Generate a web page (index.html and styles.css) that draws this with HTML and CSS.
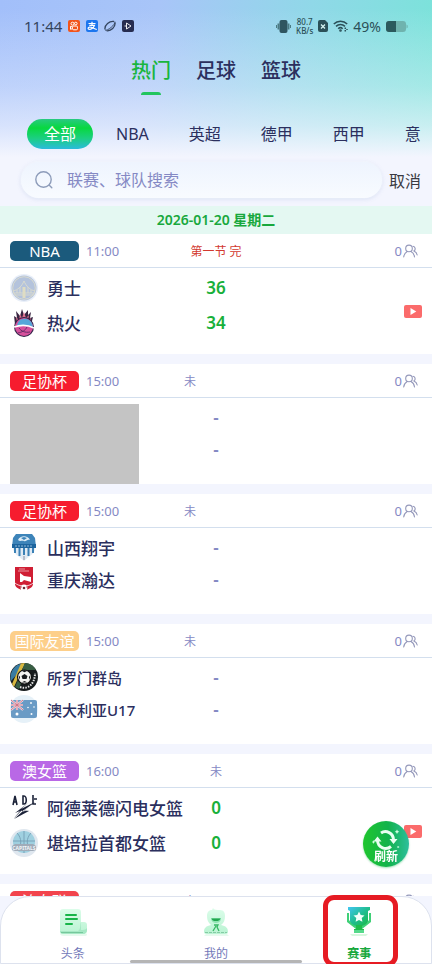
FILE: index.html
```html
<!DOCTYPE html>
<html lang="zh-CN">
<head>
  <meta charset="UTF-8">
  <meta name="viewport" content="width=device-width, initial-scale=1.0">
  <title>赛事</title>
  <link rel="stylesheet" href="styles.css">
</head>
<body>
  <svg class="sprite" aria-hidden="true">
    <symbol id="icon-people" viewBox="0 0 15 14">
      <g fill="none" stroke="#9498ba" stroke-width="1.1" stroke-linecap="round">
        <circle cx="6" cy="4.400" r="3.300"/>
        <path d="M.7 13c.3-3 2-4.600 3.500-5.500M7.900 7.500c1.800.9 3.300 2.600 3.600 5.500M10 2.200c2.200.2 3 3.400 1 4.700 1.700.7 2.900 2.100 3.200 4.100"/>
      </g>
    </symbol>
    <symbol id="icon-video" viewBox="0 0 18 13">
      <rect width="18" height="13" rx="2" fill="#fb6b6b"/>
      <path d="M6.500 3v7l5.800-3.500z" fill="#fff"/>
    </symbol>
  </svg>

  <div class="app">
    <header class="header">
      <div class="status-bar">
        <div class="status-left">
          <span class="clock">11:44</span>
          <svg width="12" height="12" viewBox="0 0 12 12">
            <rect width="12" height="12" rx="2" fill="#f2541b"/>
            <g fill="none" stroke="#fff" stroke-width="1">
              <circle cx="4.500" cy="3.700" r="1.500"/><circle cx="7.800" cy="3.500" r="1.300"/>
              <rect x="4.500" y="6" width="5" height="3.800" rx="1.200"/><path d="M4.500 7L2.500 6.300v3l2-.7"/>
            </g>
          </svg>
          <svg width="12" height="12" viewBox="0 0 12 12">
            <rect width="12" height="12" rx="2" fill="#1c76ee"/>
            <path d="M2.500 3.500h7M6 1.800v3.500M3.300 5.300h5.200C7.500 8 4.800 9.800 2.800 9.200 1.300 8.500 2.500 6.500 4.800 7.200c2 .5 3.500 1.600 6 2.300" fill="none" stroke="#fff" stroke-width="1.200"/>
          </svg>
          <svg width="12" height="12" viewBox="0 0 12 12" fill="none" stroke="#34455f" stroke-width="1.300">
            <path d="M1 9.500C.3 5 5.500.8 10 1.500M11 2.500c.7 4.500-4 8.900-8.500 8.200"/>
            <path d="M1 10c2 1.500 11-5.500 9.800-8.500" stroke-width=".9"/>
          </svg>
          <svg width="12" height="12" viewBox="0 0 12 12">
            <rect width="12" height="12" rx="2" fill="#262c50"/>
            <path d="M4.500 3v6L9 6zM2.500 6h2" fill="none" stroke="#fff" stroke-width=".9"/>
          </svg>
        </div>
        <div class="status-right">
          <svg width="15" height="13" viewBox="0 0 15 13">
            <rect x="3.500" y="0" width="8" height="13" rx="2" fill="#2f5560"/>
            <path d="M1.500 3.500h2v6h-2zM11.500 3.500h2v6h-2zM0 5h1v3H0zM14 5h1v3h-1z" fill="#4b7b84"/>
          </svg>
          <div class="speed"><span>80.7</span><span>KB/s</span></div>
          <svg width="10" height="12" viewBox="0 0 10 12">
            <path d="M2 0h5l3 3v7a2 2 0 0 1-2 2H2a2 2 0 0 1-2-2V2a2 2 0 0 1 2-2z" fill="#2b5058"/>
            <path d="M3 4.500l4 4M7 4.500l-4 4" stroke="#d5f3f1" stroke-width="1.300"/>
          </svg>
          <svg width="15" height="12" viewBox="0 0 15 12" fill="none" stroke="#2b5058" stroke-width="1.500">
            <path d="M.8 4C4.500.2 10.500.2 14.200 4M3 6.400c2.600-2.600 6.400-2.600 9 0M5.200 8.700c1.300-1.300 3.200-1.300 4.500 0"/>
            <circle cx="7.500" cy="10.500" r=".6"/><path d="M12.300 7.500v1.500M12.300 10v1.500M14 9v1"/>
          </svg>
          <span class="percent">49%</span>
          <svg width="22" height="11" viewBox="0 0 22 11">
            <rect width="20" height="11" rx="3" fill="#6fb3ae"/>
            <path d="M3 0h7v11H3a3 3 0 0 1-3-3V3a3 3 0 0 1 3-3z" fill="#2b5a5d"/>
            <path d="M20.500 3.500v4l1.200-1v-2z" fill="#6fb3ae"/>
          </svg>
        </div>
      </div>

      <nav class="tabs">
        <a href="#" class="tab active">热门</a>
        <a href="#" class="tab">足球</a>
        <a href="#" class="tab">篮球</a>
      </nav>

      <nav class="leagues">
        <button class="league active">全部</button>
        <button class="league">NBA</button>
        <button class="league">英超</button>
        <button class="league">德甲</button>
        <button class="league">西甲</button>
        <button class="league">意</button>
      </nav>
    </header>

    <form class="search">
      <label class="search-box">
        <svg width="18" height="18" viewBox="0 0 18 18" fill="none" stroke="#8d9cba" stroke-width="1.400" stroke-linecap="round">
          <circle cx="8.500" cy="8.500" r="7.700"/><path d="M14.300 14.300l2.500 2.500"/>
        </svg>
        <input type="text" placeholder="联赛、球队搜索" aria-label="联赛、球队搜索">
      </label>
      <button type="button" class="cancel">取消</button>
    </form>

    <main class="matches">
      <h2 class="date">2026-01-20 星期二</h2>

      <section class="match basketball">
        <div class="match-head">
          <div class="match-info"><span class="badge nba">NBA</span><time>11:00</time></div>
          <span class="state live">第一节 完</span>
          <span class="viewers">0<svg width="15" height="14"><use href="#icon-people"/></svg></span>
        </div>
        <div class="match-body">
          <div class="team">
            <svg class="logo" viewBox="0 0 28 28">
              <circle cx="14" cy="14" r="14" fill="#e9eff8"/><circle cx="14" cy="14" r="12.500" fill="#b4c3dc"/>
              <g fill="none" stroke="#dddccd" stroke-width=".9">
                <circle cx="14" cy="14" r="11.300"/>
                <path d="M3 19h22M4 21h20M3 17C8 16 12 12 14 7c2 5 6 9 11 10M7 16v3M10 13v6M18 13v6M21 16v3"/>
              </g>
              <path d="M12.500 13h3v11h-3z" fill="#dfddc4"/>
            </svg>
            <span class="name">勇士</span>
          </div>
          <b class="score">36</b>
          <div class="team">
            <svg class="logo" viewBox="0 0 28 28">
              <path d="M5 15L4 7l3 2-1-7 4 5 2-7 2 6 4-5v5l3-3-1 6 3-1-2 8z" fill="#392642"/>
              <path d="M7 13L6 8l3 3 1-6 2 4 2-6 2 6 3-3-1 5 3-2-1 4z" fill="#e0708f"/>
              <circle cx="14" cy="18" r="10" fill="#302448"/>
              <circle cx="14" cy="18" r="9" fill="#d6519c"/>
              <path d="M9 12c4-4 13-3 14 6-4-2-10-3-16-1 0-2 1-4 2-5z" fill="#56a7d9"/>
              <path d="M4 18c6-2 14-2 20 1" stroke="#fff" stroke-width="1.600" fill="none"/>
              <path d="M8 24c4-1 7-2 9-6M9 19c2 3 6 5 11 4" fill="none" stroke="#5b2a63" stroke-width=".9"/>
            </svg>
            <span class="name">热火</span>
          </div>
          <b class="score">34</b>
          <svg class="video" width="18" height="13"><use href="#icon-video"/></svg>
        </div>
      </section>

      <section class="match">
        <div class="match-head">
          <div class="match-info"><span class="badge cup">足协杯</span><time>15:00</time></div>
          <span class="state">未</span>
          <span class="viewers">0<svg width="15" height="14"><use href="#icon-people"/></svg></span>
        </div>
        <div class="match-body">
          <div class="masked"></div>
          <b class="score none">-</b>
          <b class="score none">-</b>
        </div>
      </section>

      <section class="match">
        <div class="match-head">
          <div class="match-info"><span class="badge cup">足协杯</span><time>15:00</time></div>
          <span class="state">未</span>
          <span class="viewers">0<svg width="15" height="14"><use href="#icon-people"/></svg></span>
        </div>
        <div class="match-body">
          <div class="team">
            <svg class="logo" viewBox="0 0 28 28">
              <path d="M6 1h16l3 4v10c0 6-6 8-11 13C9 23 3 21 3 15V5z" fill="#e1ebf4"/>
              <path d="M6 1h16l3 4 1 9H2L3 5z" fill="#3d84b9"/>
              <path d="M8 7c2-5 10-5 12 0-3-1-4 2-6 1s-4 1-6-1z" fill="#dcebf5"/>
              <path d="M11 5l3-1 3 1-3 2z" fill="#3d84b9"/>
              <path d="M2 11h24v4H2z" fill="#1d659e"/>
              <path d="M5 13h18" stroke="#8fb9d8" stroke-dasharray="2 1"/>
              <path d="M5 15v5M9.500 15v8M14 15v7M18.500 15v8M23 15v5" stroke="#3b81b6" stroke-width="2"/>
              <path d="M14 23v4" stroke="#8a8fa0"/>
            </svg>
            <span class="name">山西翔宇</span>
          </div>
          <b class="score none">-</b>
          <div class="team">
            <svg class="logo" viewBox="0 0 28 28">
              <path d="M5 2h18v17c0 4-5 5-9 7-4-2-9-3-9-7z" fill="#d01e34"/>
              <path d="M9 4h6M8 6h11" stroke="#efb5bb" stroke-width=".8"/>
              <path d="M10 17V8l4 3 7 1v5l-7-2-2 2z" fill="#fff"/>
              <path d="M5 18c4 4 14 4 18 0" stroke="#f4cdd2" fill="none"/>
              <circle cx="14" cy="23" r="3.500" fill="#fff"/><circle cx="14" cy="23" r="1.300" fill="#6f2b36"/>
              <path d="M11.500 21.500l-1 2M16.500 21.500l1 2" stroke="#a83849" stroke-width=".8"/>
            </svg>
            <span class="name">重庆瀚达</span>
          </div>
          <b class="score none">-</b>
        </div>
      </section>

      <section class="match small">
        <div class="match-head">
          <div class="match-info"><span class="badge friendly">国际友谊</span><time>15:00</time></div>
          <span class="state">未</span>
          <span class="viewers">0<svg width="15" height="14"><use href="#icon-people"/></svg></span>
        </div>
        <div class="match-body">
          <div class="team">
            <svg class="logo" viewBox="0 0 28 28">
              <circle cx="14" cy="14" r="14" fill="#171b1d"/>
              <path d="M1 18A14 14 0 0 1 10 1l5 1z" fill="#397ca2"/>
              <path d="M2 21L11 .4l4-.4L4 24z" fill="#d8b83f"/>
              <path d="M5 24L15 0c5 0 9 3 11 7H16L9 26z" fill="#385e43"/>
              <circle cx="14.500" cy="14" r="7" fill="#f4f4f1" stroke="#111" stroke-width="1.200"/>
              <path d="M14.500 11l3 2-1 3h-4l-1-3zM12 8l2.500-1L17 8l-2.500 1.200zM8.500 12l1.600 2-.6 3zM20.500 12l-1.600 2 .6 3zM11.500 19.500l3-1.500 3 1.500" fill="#181b1d"/>
              <path d="M10 24c8 3 15-3 15-14" fill="none" stroke="#e5e5e5" stroke-width="2" stroke-dasharray="1.500 1.200"/>
            </svg>
            <span class="name">所罗门群岛</span>
          </div>
          <b class="score none">-</b>
          <div class="team">
            <svg class="logo" viewBox="0 0 28 28">
              <circle cx="14" cy="14" r="14" fill="#e6f1f8"/>
              <rect x="1" y="5" width="26" height="18" rx="2" fill="#6a9bc5"/>
              <path d="M1 5l12 10M13 5L1 15M7 5v10M1 10h12" stroke="#f5e8ef" stroke-width="2.200"/>
              <path d="M1 5l12 10M13 5L1 15M7 5v10M1 10h12" stroke="#d07486" stroke-width="1"/>
              <g fill="#fff"><circle cx="7" cy="19" r="1.500"/><circle cx="21" cy="8" r=".9"/><circle cx="18" cy="12.500" r=".8"/><circle cx="24" cy="12" r=".8"/><circle cx="21.500" cy="19" r="1"/></g>
            </svg>
            <span class="name">澳大利亚U17</span>
          </div>
          <b class="score none">-</b>
        </div>
      </section>

      <section class="match basketball">
        <div class="match-head">
          <div class="match-info"><span class="badge wnbl">澳女篮</span><time>16:00</time></div>
          <span class="state">未</span>
          <span class="viewers">0<svg width="15" height="14"><use href="#icon-people"/></svg></span>
        </div>
        <div class="match-body">
          <div class="team">
            <svg class="logo" viewBox="0 0 28 28">
              <path d="M3 11l2-9 2 9M4 8h3M13 2v8h1c3 0 3-8 0-8zM23 1v9h3M24 5h3" fill="none" stroke="#1b2238" stroke-width="1.600"/>
              <path d="M25 8L9 16l4 1-9 8 15-8-4-1zM18 9L5 19l5-2-6 7 10-10-3 1zM20 16l-9 6" fill="#1b2238"/>
              <path d="M22 11l-9 6 5-1" stroke="#fff" stroke-width=".7" fill="none"/>
            </svg>
            <span class="name">阿德莱德闪电女篮</span>
          </div>
          <b class="score">0</b>
          <div class="team">
            <svg class="logo" viewBox="0 0 28 28">
              <circle cx="14" cy="14" r="14" fill="#dfe7ef"/>
              <circle cx="14" cy="13" r="11" fill="#9fd0e0"/>
              <path d="M14 2v22M3 12h22M7 4c5 5 5 13 0 18M21 4c-5 5-5 13 0 18" fill="none" stroke="#769fb5" stroke-width=".9"/>
              <path d="M2 17l3-2h18l3 2v4l-3 1H5l-3-1z" fill="#a0abb8"/>
              <text x="14" y="20.500" class="logo-text">CAPITALS</text>
            </svg>
            <span class="name">堪培拉首都女篮</span>
          </div>
          <b class="score">0</b>
          <svg class="video" width="18" height="13"><use href="#icon-video"/></svg>
        </div>
      </section>

      <section class="match">
        <div class="match-head">
          <div class="match-info"><span class="badge wleague">澳女联</span><time>17:00</time></div>
          <span class="state">未</span>
          <span class="viewers">0<svg width="15" height="14"><use href="#icon-people"/></svg></span>
        </div>
      </section>
    </main>

    <button class="refresh">
      <svg width="28" height="22" viewBox="0 0 28 22">
        <g fill="none" stroke="#e9fff2" stroke-width="3">
          <path d="M9 4C14 .5 21.500 4 21.500 11M19 17.500c-5 4-13 1.500-13.500-6"/>
        </g>
        <path d="M17.500 10h8l-4 5zM1.500 12.500h8l-4-5z" fill="#e9fff2"/>
        <path d="M25 .5l.8 1.500 1.500.8-1.500.8L25 5l-.8-1.400-1.500-.8 1.500-.8zM1.500 11l.6 1.400 1.400.6-1.400.6-.6 1.400-.6-1.400L-.5 13l1.400-.6zM26 17l1.500 1-1.500 1-1-1z" fill="#cfffe0"/>
      </svg>
      <span>刷新</span>
    </button>

    <nav class="bottom-nav">
      <a href="#" class="nav-item">
        <svg width="32" height="32" viewBox="0 0 32 32">
          <defs>
            <linearGradient id="mint" x1="0" y1="0" x2="0" y2="1"><stop offset="0" stop-color="#dcfdea"/><stop offset="1" stop-color="#b9f3d2"/></linearGradient>
          </defs>
          <path d="M6 28h22c2 0 2-1 2-2v2c0 2-1 2-3 2H7c-3 0-4-1-4-3z" fill="#e6faee"/>
          <path d="M6 3h15c2 0 3 1 3 3v10h3c2 0 3 1 3 3v5c0 3-2 4-4 4H6c-2 0-3-1-3-3V6c0-2 1-3 3-3z" fill="url(#mint)"/>
          <path d="M24 16c-1 1 0 8-3 9H3c0 2 2 3 3 3h20c3 0 4-2 4-4v-2c-1 2-4 2-6 2z" fill="#a5e8c4"/>
          <path d="M4 26.500h22" stroke="#76c79c" stroke-width="1"/>
          <path d="M9 9h10M9 13h11M9 18h6" stroke="#18b549" stroke-width="2" stroke-linecap="round"/>
        </svg>
        <span>头条</span>
      </a>
      <a href="#" class="nav-item">
        <svg width="32" height="32" viewBox="0 0 32 32">
          <path d="M6 28h21l2 2H4z" fill="#e6faee"/>
          <path d="M4 26c0-4 2-6 7-7-3-3-4-5-4-9 0-4 2-6 5-6l1-2c1 2 4 2 7 2 4 0 5 3 5 6 0 4-1 7-4 9 5 1 7 3 7 7 0 1-1 2-3 2H7c-2 0-3-1-3-2z" fill="url(#mint)"/>
          <path d="M5 26.500h22" stroke="#84cba4" stroke-dasharray="3 1"/>
          <path d="M11 12h10c0 4-3 5-5 5s-5-1-5-5z" fill="#8fe3b2"/>
          <path d="M11.500 12.500h9c-1 2-2 2.500-4.500 2.500s-4-.5-4.500-2.500z" fill="#22a74f"/>
          <path d="M14 19h4l-1 2 2 4M16 20l-3 5" fill="none" stroke="#37b965" stroke-width="1.300"/>
        </svg>
        <span>我的</span>
      </a>
      <a href="#" class="nav-item active">
        <svg width="32" height="32" viewBox="0 0 32 32">
          <defs>
            <linearGradient id="cup" x1="0" y1="0" x2="1" y2="1"><stop offset="0" stop-color="#42c6f2"/><stop offset=".5" stop-color="#20bd8e"/><stop offset="1" stop-color="#18b83b"/></linearGradient>
          </defs>
          <path d="M9 30h14l2-2H7z" fill="#d7f7df"/>
          <path d="M5 1h22v3l-2 1v10c0 4-4 6-9 6s-9-2-9-6V5L5 4z" fill="url(#cup)"/>
          <path d="M4 7h2v7l3 4 4 2v3L4 16zM28 7h-2v7l-3 4-4 2v3l9-7z" fill="#3fd077"/>
          <path d="M13 19h6v4h2v3H11v-3h2z" fill="#1fbd4a"/>
          <path d="M11 24h10v3H11z" fill="#55d98a"/>
          <path d="M16 5.500l1.700 3.400 3.800.5-2.800 2.600.7 3.800-3.400-1.800-3.400 1.800.7-3.800-2.800-2.600 3.800-.5z" fill="#f2fffb"/>
        </svg>
        <span>赛事</span>
      </a>
      <i class="home-bar"></i>
    </nav>
  </div>
</body>
</html>
```

FILE: styles.css
```css
* {
  box-sizing: border-box;
}
body {
  margin: 0;
  font-family: "Noto Sans", "Noto Sans CJK SC", sans-serif;
  color: #2b2f5e;
  background-color: #f3f5fe;
}
a {
  color: inherit;
  text-decoration: none;
}
button {
  font: inherit;
  color: inherit;
  border: none;
  background: none;
  padding: 0;
  cursor: pointer;
}
svg {
  display: block;
  flex-shrink: 0;
}
.sprite {
  position: absolute;
  width: 0;
  height: 0;
}
.app {
  height: 100vh;
  display: flex;
  flex-direction: column;
  overflow: hidden;
}

/* header */
.header {
  flex-shrink: 0;
  padding-bottom: 8px;
  background:
    linear-gradient(to bottom, rgba(243, 245, 254, 0) 5%, rgba(243, 245, 254, 0.35) 55%, rgba(243, 245, 254, 0.65) 80%, #f3f5fe 100%),
    linear-gradient(100deg, #a2bffa 0%, #a8c5f8 35%, #90d8e8 68%, #78e4d8 100%);
}
.status-bar {
  display: flex;
  justify-content: space-between;
  align-items: center;
  height: 52px;
  padding: 0 24px;
  font-size: 15px;
  color: #34455f;
}
.status-left {
  display: flex;
  align-items: center;
  gap: 6px;
}
.status-right {
  display: flex;
  align-items: center;
  gap: 5px;
  color: #2b5058;
}
.speed {
  display: flex;
  flex-direction: column;
  align-items: center;
  font-size: 8px;
  line-height: 9px;
  font-weight: 500;
}
.percent {
  font-size: 14px;
}
.tabs {
  display: flex;
  justify-content: center;
  gap: 25px;
  padding-top: 1px;
  font-size: 20px;
  font-weight: 500;
  line-height: 36px;
}
.tab.active {
  color: #18b53d;
}
.tab.active::after {
  content: "";
  display: block;
  width: 20px;
  height: 3px;
  margin: 3px auto 0;
  border-radius: 3px 3px 0 0;
  background-color: #22c55e;
}
.leagues {
  display: flex;
  gap: 6px;
  margin-top: 24px;
  padding-left: 27px;
  overflow: hidden;
}
.league {
  flex-shrink: 0;
  height: 30px;
  padding: 0 17px;
  border-radius: 15px;
  font-size: 16px;
  line-height: 28px;
}
.league.active {
  color: #fff;
  background: linear-gradient(to bottom, #29c983 0%, #08d83f 30%, #1ccf83 65%, #2bbbdc 100%);
}

/* search */
.search {
  flex-shrink: 0;
  display: flex;
  align-items: center;
  gap: 7px;
  padding: 5px 11px 8px 21px;
}
.search-box {
  flex: 1;
  display: flex;
  align-items: center;
  gap: 14px;
  height: 36px;
  padding: 0 14px;
  border-radius: 18px;
  background: linear-gradient(to bottom, #eef4fe, #f8fbff);
  box-shadow: 0 1px 4px rgba(150, 170, 215, 0.3), 0 0 0 1px #f8faff;
}
.search-box input {
  flex: 1;
  min-width: 0;
  border: none;
  outline: none;
  background: none;
  padding: 0;
  font: inherit;
  font-size: 16px;
  color: #2b2f5e;
}
.search-box input::placeholder {
  color: #8589c4;
  opacity: 1;
}
.cancel {
  font-size: 16px;
  color: #3a3a42;
}

/* matches */
.matches {
  flex: 1;
  min-height: 0;
  overflow: hidden;
}
.date {
  margin: 0;
  font-size: 14px;
  line-height: 28px;
  font-weight: 600;
  text-align: center;
  color: #18a83d;
  background-color: #e4f8f2;
}
.match {
  height: 120px;
  margin-bottom: 10px;
  background-color: #fff;
}
.match-head {
  display: grid;
  grid-template-columns: 1fr 64px 1fr;
  align-items: center;
  height: 34px;
  padding: 0 10px;
  border-bottom: 1px solid #d3dfee;
  font-size: 12px;
  color: #8589c4;
}
.match-info {
  display: flex;
  align-items: center;
  gap: 7px;
}
.match-info time {
  font-size: 13px;
}
.badge {
  width: 69px;
  border-radius: 5px;
  font-size: 15px;
  line-height: 20px;
  text-align: center;
  color: #fff;
}
.badge.nba { background-color: #1b5a7c; }
.badge.cup { background-color: #f61c2e; }
.badge.friendly { background-color: #fdcf8a; }
.badge.wnbl { background-color: #b968e6; }
.badge.wleague { background-color: #f2444d; }
.basketball .state {
  text-align: center;
}
.state.live {
  color: #d2392f;
}
.viewers {
  display: flex;
  justify-content: flex-end;
  align-items: center;
  gap: 1px;
  padding-right: 4px;
  font-size: 13px;
}
.match-body {
  display: grid;
  grid-template-columns: 1fr 48px 1fr;
  grid-auto-rows: 32px;
  align-items: center;
  padding: 3px 10px 0;
}
.basketball .match-body {
  grid-auto-rows: 35px;
  padding-top: 2px;
}
.team {
  grid-column: 1;
  display: flex;
  align-items: center;
  gap: 9px;
}
.logo {
  width: 28px;
  height: 28px;
}
.logo-text {
  font-size: 5px;
  font-weight: 700;
  text-anchor: middle;
  fill: #f0f5f8;
}
.name {
  font-size: 17px;
  font-weight: 500;
  white-space: nowrap;
}
.small .name {
  font-size: 15px;
}
.score {
  grid-column: 2;
  font-size: 17px;
  font-weight: 600;
  text-align: center;
  color: #18b03a;
}
.score.none {
  color: #8589c4;
}
.masked {
  grid-row: 1 / 3;
  width: 129px;
  height: 80px;
  margin-top: 3px;
  align-self: start;
  background-color: #c4c4c4;
}
.video {
  grid-column: 3;
  grid-row: 1 / 3;
  justify-self: end;
  align-self: center;
  margin-top: 12px;
}

/* floating button */
.refresh {
  position: fixed;
  right: 23px;
  bottom: 97px;
  width: 46px;
  height: 46px;
  display: flex;
  flex-direction: column;
  align-items: center;
  border-radius: 50%;
  color: #fff;
  font-size: 12px;
  line-height: 12px;
  font-weight: 700;
  padding-top: 8px;
  background: linear-gradient(to right, #1fc62e, #12b24c 55%, #2cbf9c);
  box-shadow: 0 1px 2px rgba(30, 180, 80, 0.4);
}

/* bottom navigation */
.bottom-nav {
  position: relative;
  flex-shrink: 0;
  display: flex;
  height: 68px;
  border: 1px solid #dde2ee;
  border-radius: 30px 30px 0 0;
  background-color: #fff;
}
.nav-item {
  flex: 1;
  display: flex;
  flex-direction: column;
  align-items: center;
  gap: 6px;
  padding-top: 9px;
  font-size: 12px;
  line-height: 20px;
  color: #7379b9;
}
.nav-item.active {
  position: relative;
  color: #18a83d;
  font-weight: 700;
}
.nav-item.active::after {
  content: "";
  box-sizing: border-box;
  position: absolute;
  top: -2px;
  left: 50%;
  width: 75px;
  height: 72px;
  margin-left: -36px;
  border: 5px solid #e61b23;
  border-radius: 11px;
}
.home-bar {
  position: absolute;
  left: 30%;
  right: 30%;
  bottom: 0;
  height: 3px;
  border-radius: 2px;
  background-color: #b5b5b5;
}
```
